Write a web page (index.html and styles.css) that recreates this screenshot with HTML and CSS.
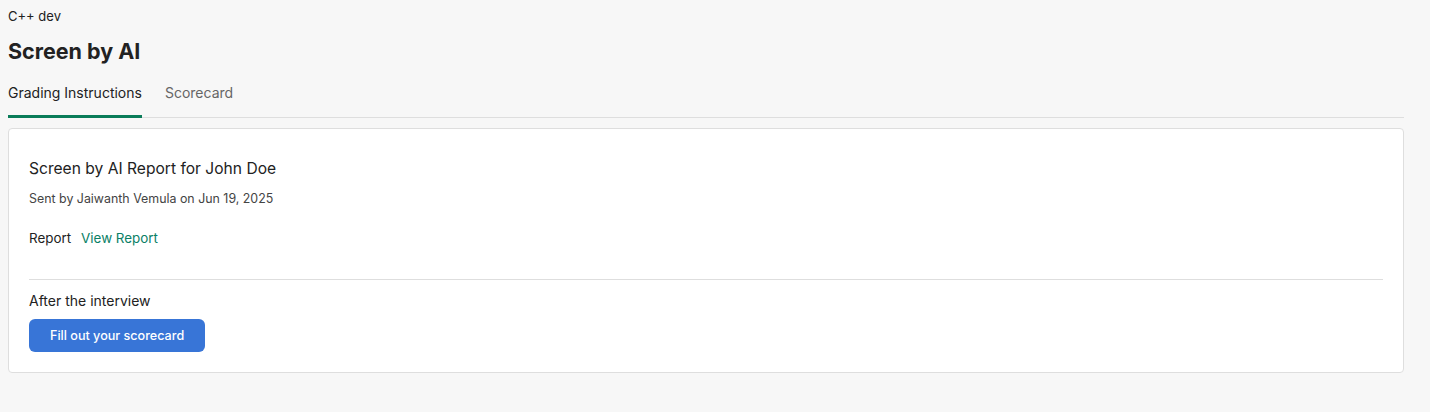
FILE: index.html
```html
<!DOCTYPE html>
<html lang="en">
<head>
    <meta charset="UTF-8">
    <title>Screen by AI</title>
    <link rel="stylesheet" href="styles.css">
</head>
<body>
    <div class="page">
        <!-- 页头 -->
        <div class="job-name">C++ dev</div>
        <h1 class="page-title">Screen by AI</h1>

        <div class="tabs">
            <div class="tab active">Grading Instructions</div>
            <div class="tab">Scorecard</div>
        </div>

        <!-- 报告卡片 -->
        <div class="card">
            <h2 class="card-title">Screen by AI Report for John Doe</h2>
            <p class="sent-by">Sent by Jaiwanth Vemula on Jun 19, 2025</p>
            <div class="report-row">
                <span>Report</span>
                <a class="report-link" href="#">View Report</a>
            </div>
            <hr class="divider">
            <p class="after-label">After the interview</p>
            <button class="btn-primary">Fill out your scorecard</button>
        </div>
    </div>
</body>
</html>
```

FILE: styles.css
```css
body {
    margin: 0;
    background: #f7f7f7;
    font-family: Inter, "Noto Sans", sans-serif;
    color: #222;
}

.page {
    padding: 8px 26px 0 8px;
}

.job-name {
    font-size: 13px;
    line-height: 16px;
}

.page-title {
    margin: 14px 0 0;
    font-size: 21.5px;
    line-height: 26px;
    font-weight: 700;
}

.tabs {
    display: flex;
    gap: 23px;
    margin-top: 20px;
    border-bottom: 1px solid #dedede;
}

.tab {
    font-size: 14px;
    line-height: 18px;
    padding-bottom: 13px;
    color: #666;
    border-bottom: 3px solid transparent;
    margin-bottom: -1px;
}

.tab.active {
    color: #222;
    border-bottom-color: #0a7c59;
}

.card {
    margin-top: 10px;
    background: #fff;
    border: 1px solid #dedede;
    border-radius: 4px;
    padding: 30px 20px 20px;
}

.card-title {
    margin: 0;
    font-size: 15.6px;
    line-height: 20px;
    font-weight: 400;
}

.sent-by {
    margin: 12px 0 0;
    font-size: 12.4px;
    line-height: 16px;
    color: #444;
}

.report-row {
    margin-top: 22px;
    display: flex;
    gap: 10px;
    font-size: 13.4px;
    line-height: 18px;
}

.report-link {
    color: #0a8066;
    text-decoration: none;
}

.divider {
    margin: 32px 0 0;
    border: 0;
    border-top: 1px solid #dedede;
}

.after-label {
    margin: 12px 0 0;
    font-size: 14px;
    line-height: 18px;
}

.btn-primary {
    margin-top: 9px;
    height: 33px;
    padding: 0 21px;
    border: 0;
    border-radius: 6px;
    background: #3875d7;
    color: #fff;
    font-family: inherit;
    font-size: 12.6px;
    font-weight: 500;
}
```
